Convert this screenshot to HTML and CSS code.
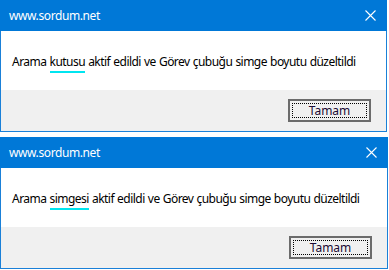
FILE: index.html
```html
<!DOCTYPE html>
<html lang="tr">
<head>
<meta charset="utf-8">
<title>sordum</title>
<link rel="stylesheet" href="styles.css">
</head>
<body>
<div class="stack">
  <div class="dialog d1">
    <div class="titlebar">
      <span class="title">www.sordum.net</span>
      <svg class="close" width="11" height="11" viewBox="0 0 11 11"><path d="M0.5 0.5 L10.5 10.5 M10.5 0.5 L0.5 10.5" stroke="#fff" stroke-width="1.1" fill="none"/></svg>
    </div>
    <div class="content">
      <p class="msg">Arama <span class="mark">kutusu</span> aktif edildi ve Görev çubuğu simge boyutu düzeltildi</p>
    </div>
    <div class="footer">
      <button class="btn"><span class="focus">Tamam</span></button>
    </div>
  </div>
  <div class="dialog d2">
    <div class="titlebar">
      <span class="title">www.sordum.net</span>
      <svg class="close" width="11" height="11" viewBox="0 0 11 11"><path d="M0.5 0.5 L10.5 10.5 M10.5 0.5 L0.5 10.5" stroke="#fff" stroke-width="1.1" fill="none"/></svg>
    </div>
    <div class="content">
      <p class="msg">Arama <span class="mark">simgesi</span> aktif edildi ve Görev çubuğu simge boyutu düzeltildi</p>
    </div>
    <div class="footer">
      <button class="btn"><span class="focus">Tamam</span></button>
    </div>
  </div>
</div>
</body>
</html>
```
FILE: styles.css
```css
html, body {
  margin: 0;
  padding: 0;
  background: #ffffff;
}
body {
  font-family: "Noto Sans", "Liberation Sans", sans-serif;
}
.stack {
  display: flex;
  flex-direction: column;
  gap: 5px;
}
.dialog {
  border: 1px solid #1a80d8;
  border-top: none;
  display: flex;
  flex-direction: column;
  background: #fff;
}
.d1 { width: 385px; }
.d2 { width: 386px; }
.titlebar {
  height: 31px;
  background: #0078d7;
  margin: 0 -1px;
  display: flex;
  align-items: center;
  justify-content: space-between;
  padding: 0 11px 0 9px;
}
.title {
  color: #fff;
  font-size: 12px;
  letter-spacing: -0.4px;
  margin-top: -1px;
  white-space: nowrap;
}
.close {
  display: block;
  margin-top: -1px;
}
.content {
  height: 59px;
  padding-left: 11px;
  display: flex;
  align-items: center;
}
.msg {
  margin: 0;
  font-size: 12px;
  color: #000;
  margin-top: 2px;
  white-space: nowrap;
  letter-spacing: -0.53px;
  word-spacing: 0.5px;
}
.mark {
  display: inline-block;
  border-bottom: 2px solid #00e5f0;
  line-height: 14px;
  padding-bottom: 2px;
  margin-bottom: -4px;
}
.footer {
  height: 41px;
  background: #f0f0f0;
  display: flex;
  justify-content: flex-end;
  align-items: flex-start;
  padding-right: 15px;
  padding-top: 9px;
  box-sizing: border-box;
}
.btn {
  width: 83px;
  height: 23px;
  border: 2px solid #6b6b6b;
  background: #f0f0f0;
  padding: 2px;
  margin: 0;
  box-sizing: border-box;
  display: flex;
  font-family: inherit;
}
.focus {
  flex: 1;
  border: 1px dotted #000;
  font-size: 12px;
  color: #1a0a33;
  display: flex;
  align-items: center;
  justify-content: center;
  line-height: 1;
}
```
